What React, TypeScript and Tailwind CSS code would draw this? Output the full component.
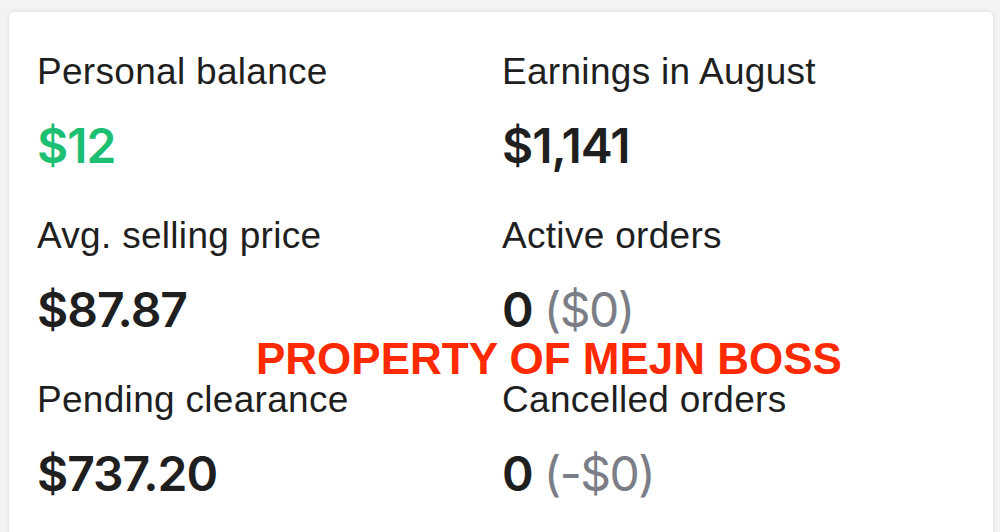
import React from 'react';

interface Stat {
  label: string;
  value: string;
  extra?: string;
  green?: boolean;
}

const stats: Stat[] = [
  { label: 'Personal balance', value: '$12', green: true },
  { label: 'Earnings in August', value: '$1,141' },
  { label: 'Avg. selling price', value: '$87.87' },
  { label: 'Active orders', value: '0', extra: '($0)' },
  { label: 'Pending clearance', value: '$737.20' },
  { label: 'Cancelled orders', value: '0', extra: '(-$0)' },
];

export default function App() {
  return (
    <div className="w-[1000px] h-[532px] overflow-hidden bg-[#f3f3f3] pt-[12px] pl-[9px] font-['Liberation_Sans',sans-serif]">
      <div className="relative w-[984px] h-[560px] bg-white rounded-[5px] shadow-[0_0_4px_rgba(0,0,0,0.12)] pl-[28px] pt-[38px]">
        <div className="grid grid-cols-[465px_1fr] gap-y-[40px]">
          {stats.map((s) => (
            <div key={s.label} className="flex flex-col">
              <div className="text-[37px] leading-[44px] text-[#1f1f1f] tracking-[0.3px]">{s.label}</div>
              <div className="mt-[24px] text-[48px] leading-[56px] font-semibold tracking-[-1px] text-[#1f1f1f] font-['Inter',sans-serif]">
                <span className={s.green ? 'text-[#1dbf73]' : ''}>{s.value}</span>
                {s.extra && (
                  <span className="ml-[11px] font-normal tracking-[-1.5px] text-[#7b7e86]">{s.extra}</span>
                )}
              </div>
            </div>
          ))}
        </div>
        <div className="absolute left-[247px] top-[322px] text-[44px] leading-[50px] font-bold text-[#ff2a00] whitespace-nowrap">
          PROPERTY OF MEJN BOSS
        </div>
      </div>
    </div>
  );
}
